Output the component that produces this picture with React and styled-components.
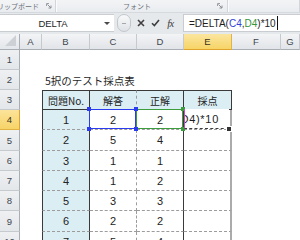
import React from "react";
import styled, { createGlobalStyle } from "styled-components";

const GlobalStyle = createGlobalStyle`
  html, body { margin: 0; padding: 0; background: #fff; }
  body { font-family: "Liberation Sans", "Noto Sans CJK JP", sans-serif; }
`;

const COLS = ["A", "B", "C", "D", "E", "F", "G"];
const ROW_HEIGHTS = [20, 20, 20, 20, 21, 20, 20, 20, 21, 20];

const TABLE = [
  ["問題No.", "解答", "正解", "採点"],
  [1, 2, 2, ""],
  [2, 5, 4, ""],
  [3, 1, 1, ""],
  [4, 1, 2, ""],
  [5, 3, 3, ""],
  [6, 2, 2, ""],
  [7, 5, 4, ""],
];

const DARK = "1px solid #3a3a3a";
const DASH = "1px dashed #9c9c9c";

const Page = styled.div`
  width: 300px;
  height: 240px;
  overflow: hidden;
  display: flex;
  flex-direction: column;
  background: #fff;
`;

/* ribbon strip */
const Ribbon = styled.div`
  height: 13px;
  flex: none;
  display: flex;
  overflow: hidden;
  background: linear-gradient(#f3f4f6, #e9ecef);
  border-bottom: 1px solid #d6dadf;
  box-sizing: border-box;
`;

const Group = styled.div`
  width: ${(p) => (p.$w ? `${p.$w}px` : "auto")};
  flex: ${(p) => (p.$w ? "none" : 1)};
  display: flex;
  align-items: center;
  justify-content: ${(p) => p.$justify || "flex-start"};
  padding: ${(p) => p.$pad || "0"};
  gap: 7px;
  box-sizing: border-box;
  border-right: 1px solid #d2d6db;
  box-shadow: 1px 0 0 #fafbfc;
`;

const GroupLabel = styled.span`
  flex: none;
  white-space: nowrap;
  font: 7px "Noto Sans CJK JP", sans-serif;
  color: #6b7078;
`;

const LauncherBox = styled.span`
  margin-left: ${(p) => (p.$auto ? "auto" : "0")};
  margin-right: ${(p) => (p.$auto ? "4px" : "0")};
  display: flex;
`;

const Launcher = ({ auto }) => (
  <LauncherBox $auto={auto}>
    <svg width="6" height="6" viewBox="0 0 6 6">
      <path d="M0.5 3V0.5H3" stroke="#9ba0a6" fill="none" />
      <path d="M1.5 1.5L5 5M5 2.5V5H2.5" stroke="#8a8f96" fill="none" />
    </svg>
  </LauncherBox>
);

/* formula bar */
const FormulaBar = styled.div`
  height: 21px;
  flex: none;
  display: flex;
  padding: 1px 0 2px;
  box-sizing: border-box;
  background: #e6e9ec;
`;

const NameBox = styled.div`
  width: 114px;
  flex: none;
  display: flex;
  align-items: center;
  background: #fff;
  border-top: 1px solid #c9cdd2;
  border-bottom: 1px solid #c9cdd2;
  box-sizing: border-box;
`;

const NameText = styled.span`
  flex: 1;
  text-align: center;
  font-size: 9.5px;
  color: #1e1e1e;
  padding-left: 2px;
`;

const DropArrow = styled.span`
  width: 0;
  height: 0;
  margin-right: 4px;
  border-left: 3px solid transparent;
  border-right: 3px solid transparent;
  border-top: 3px solid #4a4a4a;
`;

const Knob = styled.div`
  width: 14px;
  flex: none;
  margin: 0 0 0 3px;
  display: flex;
  align-items: center;
  justify-content: center;
  border-radius: 8px;
  border: 1px solid #c3c7cc;
  background: linear-gradient(#f8f9fa, #dfe2e6);
  box-sizing: border-box;

  &::after {
    content: "";
    width: 4px;
    height: 1px;
    background: #a3a8ae;
  }
`;

const Icons = styled.div`
  width: 52px;
  flex: none;
  display: flex;
  align-items: center;
  padding-left: 2px;
  box-sizing: border-box;
`;

const IconSlot = styled.span`
  width: 15px;
  display: flex;
  justify-content: center;
  align-items: center;
  color: #444;
`;

const Fx = styled.span`
  font: italic 10.5px "Liberation Serif", serif;
  color: #3c3c3c;
  letter-spacing: -0.5px;
`;

const FormulaInput = styled.div`
  flex: 1;
  display: flex;
  align-items: center;
  padding-left: 5px;
  background: #fff;
  border: 1px solid #c9cdd2;
  border-right: none;
  box-sizing: border-box;
  font-size: 10px;
  color: #1e1e1e;
  white-space: nowrap;
`;

const RefText = styled.span`
  color: ${(p) => p.$c};
`;

const Caret = styled.span`
  width: 1px;
  height: 14px;
  margin-left: 1px;
  background: #111;
`;

/* sheet */
const Sheet = styled.div`
  display: grid;
  grid-template-columns: 20px 22px 48px 47px 47px 48px 49px 1fr;
  grid-template-rows: 16px ${ROW_HEIGHTS.map((h) => `${h}px`).join(" ")};
  background: #fff;
`;

const Corner = styled.div`
  display: flex;
  align-items: flex-end;
  justify-content: flex-end;
  padding: 0 3px 3px 0;
  background: linear-gradient(#f3f4f6, #e3e6ea);
  border-right: 1px solid #a9aeb5;
  border-bottom: 1px solid #a9aeb5;
  box-sizing: border-box;
`;

const ColHead = styled.div`
  display: flex;
  align-items: center;
  justify-content: center;
  font-size: 9.5px;
  color: ${(p) => (p.$active ? "#3a3320" : "#40454c")};
  background: ${(p) =>
    p.$active
      ? "linear-gradient(#fbe6a0, #f7d466)"
      : "linear-gradient(#f3f4f6, #e1e4e8)"};
  border-right: 1px solid ${(p) => (p.$active ? "#e2b244" : "#c6cacf")};
  border-bottom: 1px solid ${(p) => (p.$active ? "#e0a32c" : "#a9aeb5")};
  box-sizing: border-box;
`;

const RowHead = styled.div`
  display: flex;
  align-items: center;
  justify-content: center;
  font-size: 9.5px;
  color: ${(p) => (p.$active ? "#3a3320" : "#40454c")};
  background: ${(p) =>
    p.$active
      ? "linear-gradient(#fbe39a, #f7d468)"
      : "linear-gradient(#eef0f2, #e4e7ea)"};
  border-bottom: 1px solid ${(p) => (p.$active ? "#e2b244" : "#c6cacf")};
  border-right: 1px solid ${(p) => (p.$active ? "#e0a32c" : "#a9aeb5")};
  box-sizing: border-box;
`;

const Blank = styled.div`
  background: #fff;
`;

const TitleCell = styled.div`
  display: flex;
  align-items: center;
  padding: 1px 0 0 3px;
  white-space: nowrap;
  font: 10.5px "Noto Sans CJK JP", sans-serif;
  color: #1f1f1f;
  z-index: 1;
`;

const TCell = styled.div`
  position: relative;
  display: flex;
  align-items: center;
  justify-content: center;
  background: ${(p) => (p.$blue ? "#daeef3" : "#fff")};
  border-top: ${(p) => p.$top || "none"};
  border-bottom: ${(p) => p.$bottom || "none"};
  border-left: ${(p) => p.$left || "none"};
  border-right: ${(p) => p.$right || "none"};
  box-sizing: border-box;
  font-family: ${(p) =>
    p.$head ? '"Noto Sans CJK JP", sans-serif' : '"Liberation Sans", sans-serif'};
  font-size: ${(p) => (p.$head ? "10px" : "11px")};
  color: #232323;
`;

const RefBox = styled.div`
  position: absolute;
  top: -1px;
  left: -1px;
  right: 0;
  bottom: 0;
  border: 1px solid ${(p) => p.$color};
  z-index: ${(p) => p.$z};
  pointer-events: none;
`;

const Handle = styled.span`
  position: absolute;
  width: 4px;
  height: 4px;
  background: ${(p) => p.$color};
  ${(p) => (p.$v === "t" ? "top: -3px;" : "bottom: -3px;")}
  ${(p) => (p.$h === "l" ? "left: -3px;" : "right: -3px;")}
`;

const Editor = styled.div`
  position: absolute;
  top: -1px;
  left: 0;
  right: 1px;
  bottom: 0;
  display: flex;
  align-items: center;
  justify-content: flex-end;
  padding-right: 10px;
  overflow: hidden;
  white-space: nowrap;
  background: #fff;
  border-left: 1px solid #d045cc;
  border-bottom: 1px dashed #3d3d3d;
  font: 11px "Liberation Sans", sans-serif;
  letter-spacing: 0.7px;
  color: #1e1e1e;
  z-index: 2;
`;

const FillHandle = styled.span`
  position: absolute;
  right: -2px;
  bottom: -3px;
  width: 4px;
  height: 4px;
  background: #333;
  border: 1px solid #fff;
  z-index: 4;
`;

const RefFrame = ({ color, z }) => (
  <RefBox $color={color} $z={z}>
    <Handle $color={color} $v="t" $h="l" />
    <Handle $color={color} $v="t" $h="r" />
    <Handle $color={color} $v="b" $h="l" />
    <Handle $color={color} $v="b" $h="r" />
  </RefBox>
);

const cellBorders = (col, r) => {
  const head = r === 0;
  const b = { $top: head ? DARK : undefined, $bottom: head ? DARK : DASH };
  if (col === "B") {
    b.$left = DARK;
    b.$right = DARK;
  }
  if (col === "C") b.$right = DASH;
  if (col === "D") b.$right = DARK;
  if (col === "E") b.$right = head ? DARK : "2px solid #ababab";
  return b;
};

const TableCell = ({ col, r, value }) => {
  const head = r === 0;
  const blue = head || col === "B";
  const b = cellBorders(col, r);
  const isRow4 = r === 1;
  return (
    <TCell $blue={blue} $head={head} {...b}>
      {col === "E" && isRow4 ? (
        <>
          <Editor>D4)*10</Editor>
          <FillHandle />
        </>
      ) : (
        value
      )}
      {col === "C" && isRow4 && <RefFrame color="#2b3cf0" z={3} />}
      {col === "D" && isRow4 && <RefFrame color="#3c9d3c" z={1} />}
    </TCell>
  );
};

const App = () => {
  const rows = ROW_HEIGHTS.map((_, i) => i + 1);
  return (
    <Page>
      <GlobalStyle />
      <Ribbon>
        <Group $w={56} $justify="flex-end" $pad="0 3px 0 0">
          <GroupLabel>クリップボード</GroupLabel>
          <Launcher />
        </Group>
        <Group $w={172} $pad="0 0 0 67px">
          <GroupLabel>フォント</GroupLabel>
          <Launcher auto />
        </Group>
        <Group />
      </Ribbon>

      <FormulaBar>
        <NameBox>
          <NameText>DELTA</NameText>
          <DropArrow />
        </NameBox>
        <Knob />
        <Icons>
          <IconSlot>
            <svg width="8" height="8" viewBox="0 0 8 8">
              <path d="M1 1L7 7M7 1L1 7" stroke="#3f3f3f" strokeWidth="1.6" />
            </svg>
          </IconSlot>
          <IconSlot>
            <svg width="9" height="8" viewBox="0 0 9 8">
              <path d="M1 4.2L3.4 6.6L8 1" stroke="#3f3f3f" strokeWidth="1.6" fill="none" />
            </svg>
          </IconSlot>
          <IconSlot>
            <Fx>fx</Fx>
          </IconSlot>
        </Icons>
        <FormulaInput>
          =DELTA(<RefText $c="#2f43d9">C4</RefText>,
          <RefText $c="#34963a">D4</RefText>)*10
          <Caret />
        </FormulaInput>
      </FormulaBar>

      <Sheet>
        <Corner>
          <svg width="11" height="11" viewBox="0 0 11 11">
            <polygon points="11,0 11,11 0,11" fill="#cdd1d6" />
          </svg>
        </Corner>
        {COLS.map((c) => (
          <ColHead key={c} $active={c === "E"}>
            {c}
          </ColHead>
        ))}
        {rows.map((row) => (
          <React.Fragment key={row}>
            <RowHead $active={row === 4}>{row}</RowHead>
            {COLS.map((col, ci) => {
              const key = `${col}${row}`;
              if (row === 2 && col === "B")
                return <TitleCell key={key}>5択のテスト採点表</TitleCell>;
              if (row >= 3 && ci >= 1 && ci <= 4) {
                const r = row - 3;
                return (
                  <TableCell key={key} col={col} r={r} value={TABLE[r][ci - 1]} />
                );
              }
              return <Blank key={key} />;
            })}
          </React.Fragment>
        ))}
      </Sheet>
    </Page>
  );
};

export default App;
